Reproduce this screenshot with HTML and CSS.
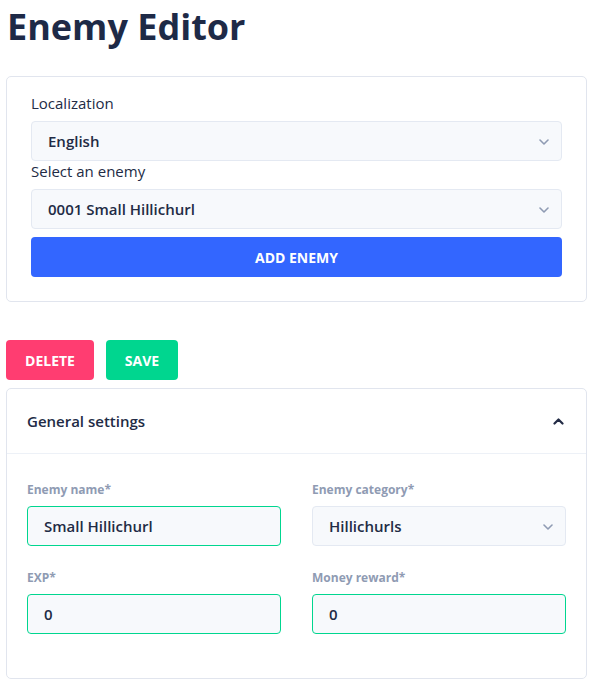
FILE: index.html
```html
<!DOCTYPE html>
<html lang="en">
<head>
<meta charset="utf-8">
<title>Enemy Editor</title>
<link rel="stylesheet" href="styles.css">
</head>
<body>
<div class="page">
  <h1 class="title">Enemy Editor</h1>

  <div class="card top-card">
    <label class="field-label">Localization</label>
    <div class="select">
      <span>English</span>
      <svg class="chev" width="10" height="6" viewBox="0 0 10 6"><path d="M1 1l4 4 4-4" fill="none" stroke="#8f9bb3" stroke-width="1.6" stroke-linecap="round" stroke-linejoin="round"/></svg>
    </div>
    <label class="field-label">Select an enemy</label>
    <div class="select">
      <span>0001 Small Hillichurl</span>
      <svg class="chev" width="10" height="6" viewBox="0 0 10 6"><path d="M1 1l4 4 4-4" fill="none" stroke="#8f9bb3" stroke-width="1.6" stroke-linecap="round" stroke-linejoin="round"/></svg>
    </div>
    <button class="btn btn-primary">ADD ENEMY</button>
  </div>

  <div class="actions">
    <button class="btn btn-danger">DELETE</button>
    <button class="btn btn-success">SAVE</button>
  </div>

  <div class="card settings">
    <div class="settings-header">
      <span>General settings</span>
      <svg width="11" height="7" viewBox="0 0 11 7"><path d="M1.5 5.5l4-4 4 4" fill="none" stroke="#222b45" stroke-width="2.2" stroke-linecap="round" stroke-linejoin="round"/></svg>
    </div>
    <div class="settings-body">
      <div class="form-group">
        <label class="small-label">Enemy name*</label>
        <div class="input valid">Small Hillichurl</div>
      </div>
      <div class="form-group">
        <label class="small-label">Enemy category*</label>
        <div class="select">
          <span>Hillichurls</span>
          <svg class="chev" width="10" height="6" viewBox="0 0 10 6"><path d="M1 1l4 4 4-4" fill="none" stroke="#8f9bb3" stroke-width="1.6" stroke-linecap="round" stroke-linejoin="round"/></svg>
        </div>
      </div>
      <div class="form-group">
        <label class="small-label">EXP*</label>
        <div class="input valid">0</div>
      </div>
      <div class="form-group">
        <label class="small-label">Money reward*</label>
        <div class="input valid">0</div>
      </div>
    </div>
  </div>
</div>
</body>
</html>
```

FILE: styles.css
```css
* { box-sizing: border-box; }
html, body { margin: 0; padding: 0; background: #fff; }
body {
  font-family: "Open Sans", "Liberation Sans", sans-serif;
  color: #222b45;
}
.page {
  padding: 3px 6px 0 6px;
}
.title {
  margin: 0 0 25px 0;
  font-size: 36px;
  line-height: 48px;
  font-weight: 700;
  color: #1e2a47;
  padding-left: 1px;
}
.card {
  border: 1px solid #e1e5ee;
  border-radius: 5px;
  background: #fff;
}
.top-card {
  padding: 16px 24px 24px 24px;
  display: flex;
  flex-direction: column;
}
.field-label {
  display: block;
  font-size: 15px;
  line-height: 20px;
  font-weight: 400;
  color: #222b45;
  margin-bottom: 8px;
}
.select, .input {
  height: 40px;
  border: 1px solid #e4e9f2;
  border-radius: 4px;
  background: #f7f9fc;
  display: flex;
  align-items: center;
  padding: 0 12px 0 16px;
  font-size: 15px;
  font-weight: 600;
  color: #222b45;
}
.select span { flex: 1; }
.select .chev { margin-top: 1px; }
.input.valid { border-color: #00d68f; }
.btn {
  height: 40px;
  border: none;
  border-radius: 4px;
  font-family: "Open Sans", "Liberation Sans", sans-serif;
  font-weight: 700;
  font-size: 14px;
  color: #fff;
  padding: 0 12px;
}
.btn-primary {
  background: #3366ff;
  margin-top: 8px;
  width: 100%;
}
.btn-danger { background: #ff3d71; width: 88px; }
.btn-success { background: #00d68f; width: 72px; }
.actions {
  display: flex;
  gap: 12px;
  margin-top: 38px;
  margin-bottom: 8px;
}
.settings-header {
  height: 65px;
  border-bottom: 1px solid #edf1f7;
  display: flex;
  align-items: center;
  justify-content: space-between;
  padding: 0 22px 0 20px;
  font-size: 15px;
  font-weight: 600;
  color: #222b45;
}
.settings-body {
  padding: 28px 20px 44px 20px;
  display: grid;
  grid-template-columns: 1fr 1fr;
  column-gap: 31px;
  row-gap: 24px;
}
.small-label {
  display: block;
  font-size: 12px;
  line-height: 16px;
  font-weight: 700;
  color: #8f9bb3;
  margin-bottom: 8px;
}
```
